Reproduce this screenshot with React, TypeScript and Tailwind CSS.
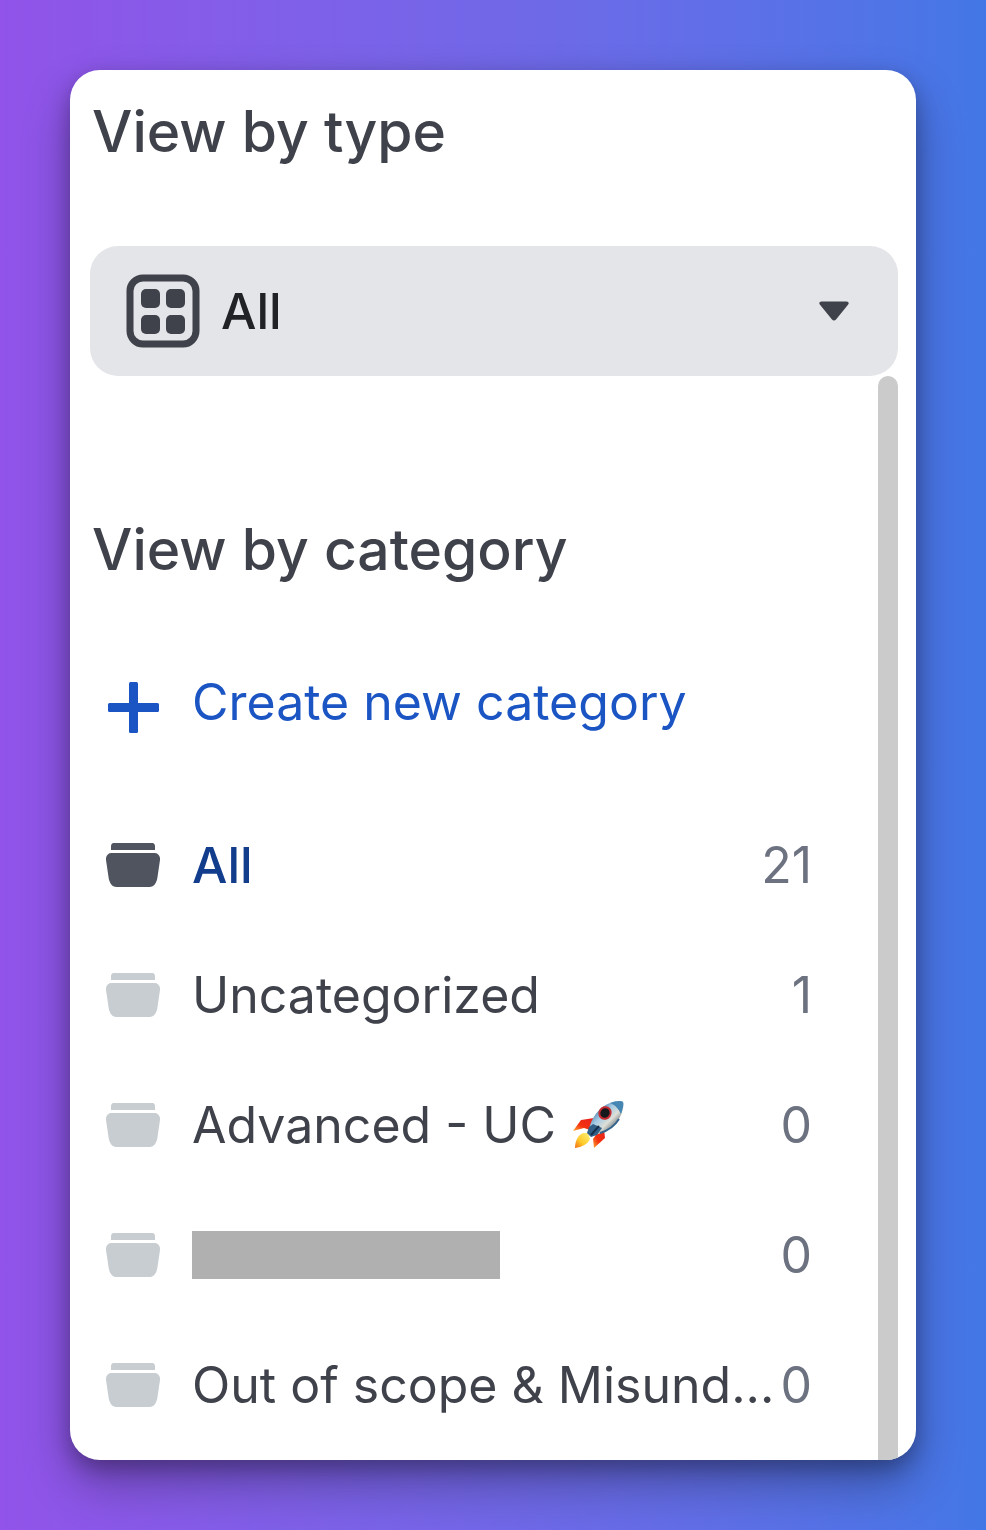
import { useState } from "react";

type Category = {
  id: string;
  label: string;
  count: number;
  rocket?: boolean;
  redacted?: boolean;
};

const categories: Category[] = [
  { id: "all", label: "All", count: 21 },
  { id: "uncategorized", label: "Uncategorized", count: 1 },
  { id: "advanced", label: "Advanced - UC", count: 0, rocket: true },
  { id: "hidden", label: "", count: 0, redacted: true },
  { id: "out-of-scope", label: "Out of scope & Misund...", count: 0 },
];

function GridIcon() {
  return (
    <svg viewBox="0 0 74 74" className="size-[74px]" aria-hidden="true">
      <rect x="4" y="4" width="66" height="66" rx="13" fill="none" stroke="#3f424a" strokeWidth="7" />
      <g fill="#3f424a">
        <rect x="15" y="15" width="19" height="19" rx="5" />
        <rect x="40" y="15" width="19" height="19" rx="5" />
        <rect x="15" y="41" width="19" height="19" rx="5" />
        <rect x="40" y="41" width="19" height="19" rx="5" />
      </g>
    </svg>
  );
}

function CaretIcon() {
  return (
    <svg viewBox="0 0 30 20" className="h-5 w-[30px]" aria-hidden="true">
      <path d="M2.5 0.500h25c2 0 2.900 1.700 1.500 3.200L17 18.400c-1.100 1.300-2.900 1.300-4 0L1 3.700C-.4 2.200.5.500 2.500.500Z" fill="#3f424a" />
    </svg>
  );
}

function PlusIcon() {
  return (
    <svg viewBox="0 0 54 54" className="size-[54px] shrink-0" aria-hidden="true">
      <rect x="2" y="23" width="51" height="9" rx="1.500" fill="#1b55c4" />
      <rect x="23" y="2" width="9" height="51" rx="1.500" fill="#1b55c4" />
    </svg>
  );
}

function FolderIcon({ active }: { active: boolean }) {
  return (
    <svg
      viewBox="0 0 54 46"
      className={`h-[46px] w-[54px] shrink-0 ${active ? "text-[#50545e]" : "text-[#c8cdd1]"}`}
      fill="currentColor"
      aria-hidden="true"
    >
      <path d="M7.500 1h39c1.500 0 2.500 1.500 2.500 3v4H5V4c0-1.500 1-3 2.500-3Z" />
      <path d="M5.500 11h43c3.500 0 6 3 5.500 7l-2.500 17c-.800 6-3.500 10-8 10h-33c-4.500 0-7.200-4-8-10L0 18c-.500-4 2-7 5.500-7Z" />
    </svg>
  );
}

function RocketIcon() {
  return (
    <svg viewBox="0 0 52 50" className="h-[50px] w-[52px] shrink-0" role="img" aria-label="rocket">
      <defs>
        <linearGradient id="body" x1="0.2" y1="0.2" x2="0.8" y2="0.8">
          <stop offset="0" stopColor="#3f78a8" />
          <stop offset="0.350" stopColor="#a5cae3" />
          <stop offset="0.650" stopColor="#dedfd7" />
          <stop offset="1" stopColor="#55606a" />
        </linearGradient>
        <linearGradient id="flame" x1="1" y1="0" x2="0" y2="1">
          <stop offset="0" stopColor="#fff27a" />
          <stop offset="0.600" stopColor="#ffc928" />
          <stop offset="1" stopColor="#f26a16" />
        </linearGradient>
        <linearGradient id="fin" x1="1" y1="0" x2="0" y2="1">
          <stop offset="0" stopColor="#e3211c" />
          <stop offset="0.600" stopColor="#f5310f" />
          <stop offset="1" stopColor="#ffac37" />
        </linearGradient>
      </defs>
      <path d="M22 18 9 20 1 31l11-3 6 2Z" fill="url(#fin)" />
      <path d="m32 29 1 9-11 10-1-9 5-7Z" fill="url(#fin)" />
      <path d="M11 33c-5 2-8 8-8 15 7-1 13-4 15-9l-2-6Z" fill="url(#flame)" />
      <path d="M17 30c2-12 10-23 21-27 5-2 11-3 13-1 1 2 0 8-2 13-5 11-15 17-26 20Z" fill="url(#body)" />
      <path d="M38 3c5-2 11-3 13-1 1 2 0 7-2 12-3-6-6-9-11-11Z" fill="#4686b3" />
      <path d="m17 27-2 6 4 4 6-2 5-7-9-4Z" fill="#315f87" />
      <path d="m27 26-8 9" stroke="#152f49" strokeWidth="2" />
      <ellipse cx="33" cy="13" rx="5.500" ry="6" fill="#16191c" stroke="#c52b30" strokeWidth="2" transform="rotate(35 33 13)" />
      <path d="M47 19c-5 8-12 12-19 14" stroke="#35658d" strokeWidth="2" fill="none" />
    </svg>
  );
}

export default function App() {
  const [type, setType] = useState("all");
  const [selected, setSelected] = useState("all");

  return (
    <main className="min-h-screen bg-linear-to-r from-[#9153e9] to-[#4377e6] p-[70px] font-['Inter',sans-serif] text-[#3f424a]">
      <aside className="overflow-hidden rounded-[30px] bg-white pr-[18px] pl-5 shadow-[0_24px_48px_rgba(0,0,0,0.3),0_8px_20px_rgba(0,0,0,0.25)]">
        <label htmlFor="view-type" className="block pt-[26px] pb-[78px] pl-[2px] text-[57px] leading-[72px] font-medium">
          View by type
        </label>

        <div className="grid items-center">
          <select
            id="view-type"
            value={type}
            onChange={(event) => setType(event.target.value)}
            className="col-start-1 row-start-1 h-[130px] w-full appearance-none rounded-[28px] bg-[#e4e5e9] pr-20 pl-[131px] text-[50px] font-medium text-[#202226]"
          >
            <option value="all">All</option>
          </select>
          <div className="pointer-events-none col-start-1 row-start-1 flex items-center justify-between pr-[49px] pl-9">
            <GridIcon />
            <CaretIcon />
          </div>
        </div>

        <div className="flex">
          <section className="min-w-0 flex-1 pt-[138px] pb-[10px]">
            <h2 className="pl-[2px] text-[57px] leading-[72px] font-medium">View by category</h2>

            <button
              type="button"
              className="mt-[84px] mb-[66px] flex w-full items-end gap-8 pl-4 text-left text-[50px] leading-[64px] whitespace-nowrap text-[#1b55c4]"
            >
              <PlusIcon />
              Create new category
            </button>

            <ul>
              {categories.map((category) => {
                const active = category.id === selected;

                return (
                  <li key={category.id}>
                    <button
                      type="button"
                      onClick={() => setSelected(category.id)}
                      aria-label={category.redacted ? "Hidden category" : undefined}
                      aria-pressed={active}
                      className="flex h-[130px] w-full items-center pr-[66px] pl-4 text-left text-[50px] whitespace-nowrap"
                    >
                      <FolderIcon active={active} />
                      <span
                        className={`ml-8 flex min-w-0 flex-1 items-center gap-4 ${active ? "font-medium text-[#123c8c]" : ""}`}
                      >
                        {category.redacted ? (
                          <span className="h-12 w-[308px] bg-[#b0b0b0]" />
                        ) : (
                          category.label
                        )}
                        {category.rocket && <RocketIcon />}
                      </span>
                      <span className="text-[#6d7280]">{category.count}</span>
                    </button>
                  </li>
                );
              })}
            </ul>
          </section>
          <div className="w-5 shrink-0 rounded-t-[10px] bg-[#cbcbcb]" />
        </div>
      </aside>
    </main>
  );
}
